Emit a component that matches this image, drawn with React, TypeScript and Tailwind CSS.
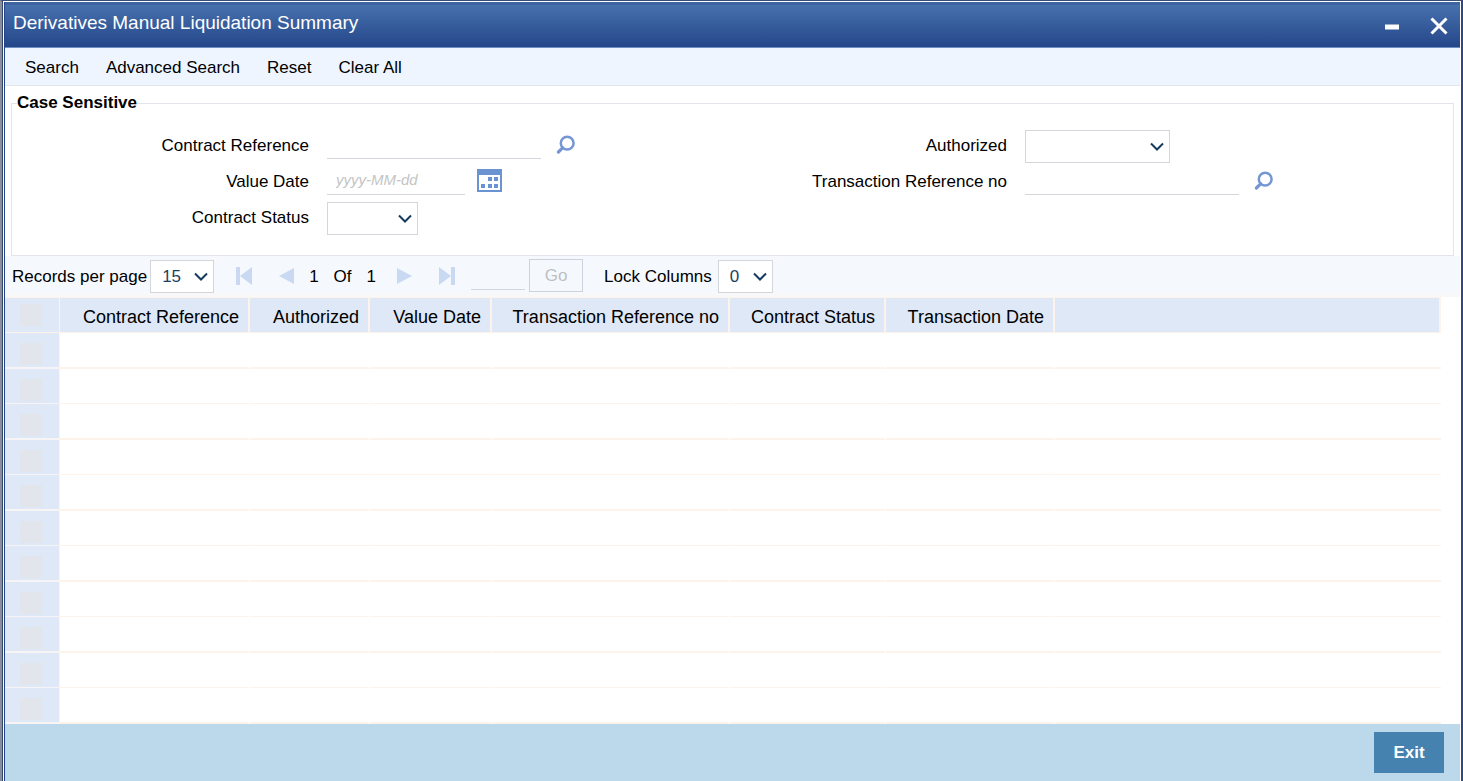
import { ReactNode, SelectHTMLAttributes } from "react";

const columns = [
  { label: "Contract Reference", width: "w-[190px]" },
  { label: "Authorized", width: "w-[120px]" },
  { label: "Value Date", width: "w-[122px]" },
  { label: "Transaction Reference no", width: "w-[238px]" },
  { label: "Contract Status", width: "w-[156px]" },
  { label: "Transaction Date", width: "w-[169px]" },
];

const rows = Array.from({ length: 11 }, (_, i) => i + 1);

function MagnifierIcon() {
  return (
    <svg width="20" height="20" viewBox="0 0 20 20" fill="none" stroke="#7497d3" aria-hidden="true">
      <circle cx="11.2" cy="8.2" r="6.4" strokeWidth="2.5" />
      <path d="M6.6 12.8 2.4 17" strokeWidth="3.2" strokeLinecap="round" />
    </svg>
  );
}

function CalendarIcon() {
  return (
    <svg width="25" height="23" viewBox="0 0 25 23" aria-hidden="true">
      <path fill="#6b93d1" d="M0 0h25v23H0z" />
      <path fill="#fff" d="M2 6h21v15H2z" />
      <path fill="#6b93d1" d="M11 8h4v4h-4zM17 8h4v4h-4zM4 15h4v4H4zM11 15h4v4h-4zM17 15h4v4h-4z" />
    </svg>
  );
}

function Dropdown({ className, ...props }: SelectHTMLAttributes<HTMLSelectElement>) {
  return (
    <span className="relative inline-flex">
      <select
        {...props}
        className={"h-[33px] appearance-none rounded-none border border-[#d3d6da] bg-white pl-[11px] text-[17px] text-[#1c4060] outline-none " + className}
      />
      <svg className="pointer-events-none absolute top-3 right-[6px]" width="14" height="10" viewBox="0 0 14 10" fill="none" stroke="#143a61" strokeWidth="2" aria-hidden="true">
        <path d="M1 1.5 7 7.5 13 1.5" />
      </svg>
    </span>
  );
}

function Field({ id, label, children }: { id: string; label: string; children: ReactNode }) {
  return (
    <div className="flex h-9 items-center">
      <label htmlFor={id} className="w-[315px] shrink-0 pr-[18px] pb-px text-right">
        {label}
      </label>
      {children}
    </div>
  );
}

function LookupInput({ id, label }: { id: string; label: string }) {
  return (
    <>
      <input id={id} type="text" className="h-[31px] w-[214px] self-start border-b border-[#d3d6da] bg-transparent px-2 outline-none" />
      <button type="button" aria-label={"Look up " + label} className="mb-0.5 ml-[15px]">
        <MagnifierIcon />
      </button>
    </>
  );
}

function PagerButton({ label, d }: { label: string; d: string }) {
  return (
    <button type="button" aria-label={label} className="pb-[2px]">
      <svg width="16" height="18" viewBox="0 0 16 18" fill="#c9d9f1" aria-hidden="true">
        <path d={d} />
      </svg>
    </button>
  );
}

export default function App() {
  return (
    <div className="flex min-h-screen flex-col border-t border-r-2 border-l-2 border-t-[#3c4d78] border-r-[#2f4a80] border-l-[#8a8f9b] bg-white font-['Liberation_Sans',Arial,sans-serif] text-[17px] leading-5 text-black">
      <div className="flex grow flex-col border-l border-[#34456e] px-px pt-px">
        <div className="flex grow flex-col border-l border-[#24448a]">
          <header className="flex h-[46px] items-start justify-between border-t-[3px] border-b border-t-[#3f64a2] border-b-[#6f8fc0] bg-linear-to-b from-[#4770ad] to-[#25478a] pr-3 pl-2 text-white">
            <h1 className="pt-[6px] text-[19px] leading-6">Derivatives Manual Liquidation Summary</h1>
            <div className="flex gap-[26px] pt-[11px]">
              <button type="button" aria-label="Minimize">
                <svg width="24" height="20" viewBox="0 0 24 20" aria-hidden="true">
                  <path d="M5 8.5h14v5H5z" fill="#fff" />
                </svg>
              </button>
              <button type="button" aria-label="Close">
                <svg width="18" height="20" viewBox="0 0 18 20" stroke="#fff" strokeWidth="3" aria-hidden="true">
                  <path d="M1.5 2.5 16.5 17.5M16.5 2.5 1.5 17.5" />
                </svg>
              </button>
            </div>
          </header>

          <nav className="flex h-[38px] items-center gap-[27px] border-b border-[#e2e6ec] bg-[#eef5ff] pt-0.5 pl-5">
            <button type="button">Search</button>
            <button type="button">Advanced Search</button>
            <button type="button">Reset</button>
            <button type="button">Clear All</button>
          </nav>

          <fieldset className="mx-[6px] mt-[7px] h-[163px] border border-[#e2e6ec] pt-[15px] pb-[17px]">
            <legend className="ml-[5px] text-[17px] leading-5 font-bold">Case Sensitive</legend>
            <div className="grid grid-cols-[698px_1fr]">
              <div>
                <Field id="contractRef" label="Contract Reference">
                  <LookupInput id="contractRef" label="Contract Reference" />
                </Field>
                <Field id="valueDate" label="Value Date">
                  <input id="valueDate" type="text" placeholder="yyyy-MM-dd" className="h-[31px] w-[138px] self-start border-b border-[#d3d6da] bg-transparent px-[9px] text-[15px] outline-none placeholder:text-[#c4c4c4] placeholder:italic" />
                  <button type="button" aria-label="Choose date" className="mb-1 ml-3">
                    <CalendarIcon />
                  </button>
                </Field>
                <Field id="contractStatus" label="Contract Status">
                  <Dropdown id="contractStatus" className="w-[91px]" />
                </Field>
              </div>
              <div>
                <Field id="authorized" label="Authorized">
                  <Dropdown id="authorized" className="w-[145px]" />
                </Field>
                <Field id="transactionRef" label="Transaction Reference no">
                  <LookupInput id="transactionRef" label="Transaction Reference no" />
                </Field>
              </div>
            </div>
          </fieldset>

          <div className="flex h-[41px] items-center border-b-4 border-[#f8f8f8] bg-[#f5f9fe] pt-1 pl-[7px]">
            <label htmlFor="pageSize" className="mr-[3px]">Records per page</label>
            <Dropdown id="pageSize" className="w-16">
              <option>15</option>
            </Dropdown>
            <div className="ml-[22px] flex items-center">
              <PagerButton label="First page" d="M0 0h4v18H0zM16 0v18L4 9z" />
              <span className="w-[27px]" />
              <PagerButton label="Previous page" d="M15 1v16L0 9z" />
              <span className="ml-[14px] flex gap-[15px]">
                <span>1</span>
                <span>Of</span>
                <span>1</span>
              </span>
              <span className="w-[21px]" />
              <PagerButton label="Next page" d="M0 1v16L15 9z" />
              <span className="w-[26px]" />
              <PagerButton label="Last page" d="M0 0v18L12 9zM12 0h4v18h-4z" />
            </div>
            <input type="text" aria-label="Page number" className="ml-4 h-[26px] w-[54px] border-b border-[#d3d6da] bg-transparent outline-none" />
            <button type="button" disabled className="mb-[2px] ml-1 h-[33px] w-[54px] border border-[#ccd3dc] text-[#bcbfc4]">Go</button>
            <label htmlFor="lockColumns" className="mr-[6px] ml-[21px]">Lock Columns</label>
            <Dropdown id="lockColumns" className="w-[55px]">
              <option>0</option>
            </Dropdown>
          </div>

          <div className="pr-[19px]">
            <table className="w-full table-fixed border-separate border-spacing-0">
              <thead>
                <tr className="h-9 bg-[#dfe8f6]">
                  <th scope="col" className="w-[55px] border-t border-r border-b border-[#fdf3ea] pl-[15px]">
                    <input type="checkbox" aria-label="Select all rows" disabled className="block size-[22px] appearance-none bg-[#e3e5ec]" />
                  </th>
                  {columns.map((c) => (
                    <th key={c.label} scope="col" className={"border-t border-r-2 border-b border-[#fdf3ea] pt-1 pr-[9px] text-right text-[18px] font-normal whitespace-nowrap " + c.width}>
                      {c.label}
                    </th>
                  ))}
                  <td className="border-t border-r-2 border-b border-[#fdf3ea]" />
                </tr>
              </thead>
              <tbody>
                {rows.map((r) => (
                  <tr key={r} className="group h-[35px] odd:h-9">
                    <td className="border-r border-b border-[#f6f4f4] bg-[#dfe8f6] pt-2 pl-[15px] group-odd:border-b-2">
                      <input type="checkbox" aria-label={"Select row " + r} disabled className="block size-[22px] appearance-none bg-[#e3e5ec]" />
                    </td>
                    {columns.map((c) => (
                      <td key={c.label} className="border-r-2 border-b border-r-white border-b-[#fdf3ea] group-odd:border-b-2" />
                    ))}
                    <td className="border-b border-[#fdf3ea] group-odd:border-b-2" />
                  </tr>
                ))}
              </tbody>
            </table>
          </div>

          <footer className="flex grow items-start justify-end bg-[#bcd9ec] pt-2 pr-4">
            <button type="button" className="h-[41px] w-[70px] bg-[#4682af] font-bold text-white">Exit</button>
          </footer>
        </div>
      </div>
    </div>
  );
}
